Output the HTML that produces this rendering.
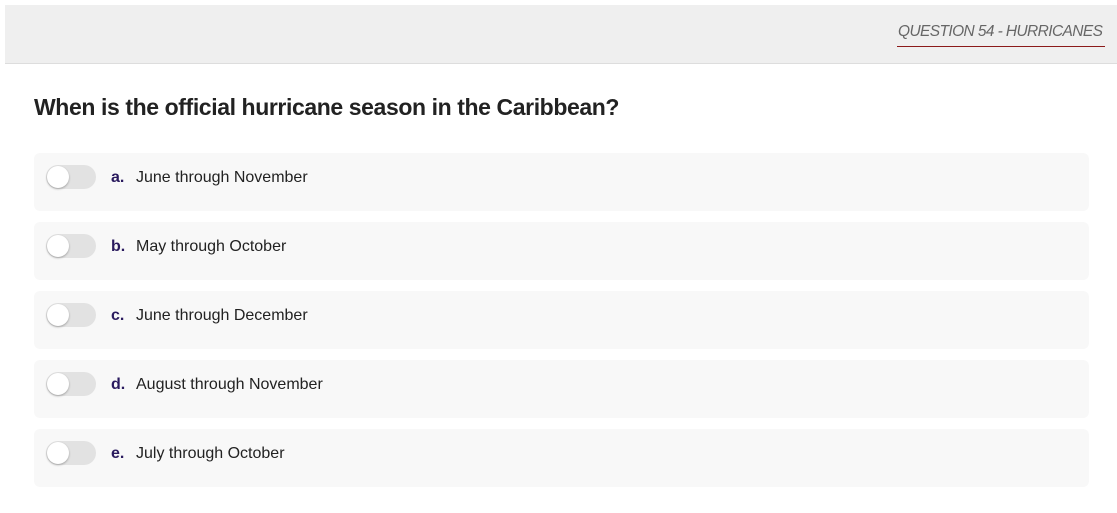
<!DOCTYPE html>
<html><head><style>
body{margin:0;background:#fff;font-family:"Liberation Sans",sans-serif;width:1117px;height:513px;overflow:hidden;position:relative}
.hdr{position:absolute;left:5px;top:5px;width:1112px;height:58px;background:#efefef;border-bottom:1px solid #ddd}
.qt{position:absolute;left:898px;top:23px;font-size:15.5px;font-style:italic;color:#666;letter-spacing:-0.6px;white-space:nowrap}
.ul{position:absolute;left:897px;top:46px;width:208px;height:1px;background:#8b1a1a}
h1{position:absolute;left:34px;top:94px;margin:0;font-size:23px;font-weight:bold;color:#222;letter-spacing:-0.4px}
.opt{position:absolute;left:34px;width:1055px;height:58px;background:#f8f8f8;border-radius:6px}
.tg{position:absolute;left:12px;top:12px;width:50px;height:24px;border-radius:12px;background:#e2e2e2}
.kn{position:absolute;left:1px;top:1px;width:22px;height:22px;border-radius:50%;background:#fff;box-shadow:0 1px 2px rgba(0,0,0,.3)}
.l{position:absolute;left:77px;top:16px;font-size:16px;font-weight:bold;color:#2a1a5e}
.t{position:absolute;left:102px;top:16px;font-size:16px;color:#222}
</style></head><body>
<div class="hdr"></div>
<div class="qt">QUESTION 54 - HURRICANES</div>
<div class="ul"></div>
<h1>When is the official hurricane season in the Caribbean?</h1>
<div class="opt" style="top:153px"><div class="tg"><div class="kn"></div></div><span class="l">a.</span><span class="t">June through November</span></div>
<div class="opt" style="top:222px"><div class="tg"><div class="kn"></div></div><span class="l">b.</span><span class="t">May through October</span></div>
<div class="opt" style="top:291px"><div class="tg"><div class="kn"></div></div><span class="l">c.</span><span class="t">June through December</span></div>
<div class="opt" style="top:360px"><div class="tg"><div class="kn"></div></div><span class="l">d.</span><span class="t">August through November</span></div>
<div class="opt" style="top:429px"><div class="tg"><div class="kn"></div></div><span class="l">e.</span><span class="t">July through October</span></div>
</body></html>
